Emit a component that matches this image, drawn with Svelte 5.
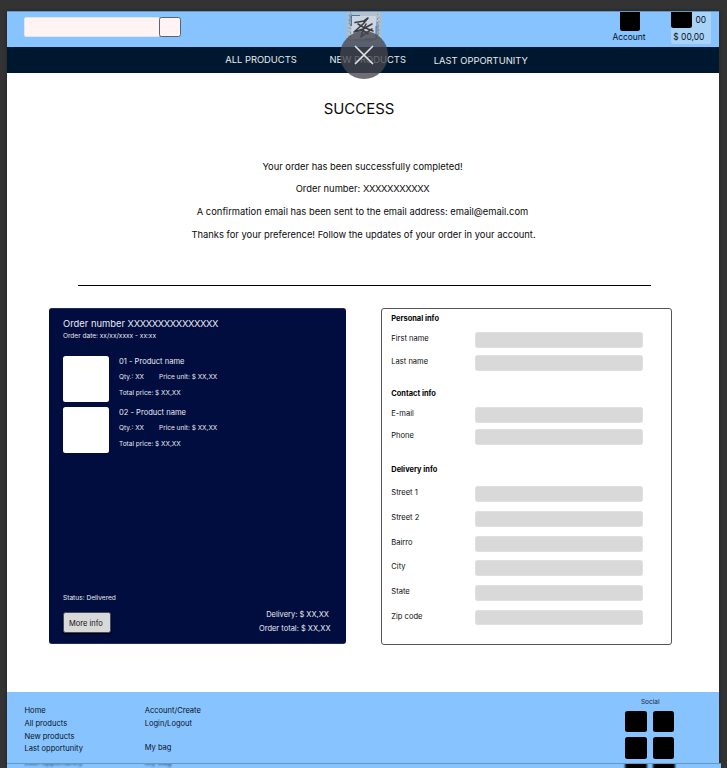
<script>
  const products = ['01 - Product name', '02 - Product name'];
  const groups = [
    { title: 'Personal info', kind: 'personal', fields: ['First name', 'Last name'] },
    { title: 'Contact info', kind: 'contact', fields: ['E-mail', 'Phone'] },
    { title: 'Delivery info', kind: 'delivery', fields: ['Street 1', 'Street 2', 'Bairro', 'City', 'State', 'Zip code'] }
  ];
</script>

<div class="backdrop">
  <div class="page">
    <header>
      <div class="search"><div class="query"></div><button class="go" aria-label="Search"></button></div>
      <svg class="logo" width="36" height="32" viewBox="0 0 36 32">
        <rect width="36" height="32" fill="#a3bfd8" />
        <path d="M2 0h32v31H2z" fill="#b4c2cf" />
        <path d="M3 2l3-1 1 6-2 8-2-3zM29 8l4 4v11l-3 2zM5 28l8-2 15 2-3 2-15-1z" fill="#6d93b5" opacity=".6" />
        <path d="M4.500 0v32M3 3v26M31.500 2v29M33 5v24" stroke="#587f9f" stroke-dasharray="1 3 2 2" opacity=".6" />
        <rect x="5.500" y="4" width="24.500" height="23" fill="#ccd5e1" />
        <path d="M5.500 14V3.500H14M30 14v13H19" fill="none" stroke="#47799e" />
        <g fill="none" stroke="#3c3d42" stroke-width="1.600" stroke-linecap="round" stroke-linejoin="round">
          <path d="M9 10.500l9-1.500 4-3-5 6-9 8 9-3 9-5M8 20l9-2" />
          <path d="M12 12l5 3 10 4M20 12l-3 6-2 7 5-4 6-4M18 19l4 3" />
        </g>
      </svg>
      <div class="account"><i></i><span>Account</span></div>
      <div class="bag"><div class="count"><i></i><span>00</span></div><span>$ 00,00</span></div>
    </header>
    <nav><a>ALL PRODUCTS</a><a>NEW PRODUCTS</a><a class="last">LAST OPPORTUNITY</a></nav>
    <svg class="close" width="48" height="48" viewBox="0 0 48 48">
      <circle cx="24" cy="24" r="24" fill="#45454d" fill-opacity=".78" />
      <path d="M15.500 15.500l17 17M32.500 15.500l-17 17" stroke="#e1e3e7" stroke-width="1.700" stroke-linecap="round" />
    </svg>

    <main>
      <h1>SUCCESS</h1>
      <div class="message">
        <p>Your order has been successfully completed!</p>
        <p>Order number: <span class="xs">XXXXXXXXXXX</span></p>
        <p>A confirmation email has been sent to the email address: email@email.com</p>
        <p class="thanks">Thanks for your preference! Follow the updates of your order in your account.</p>
      </div>
      <hr />
      <div class="cards">
        <section class="order">
          <h2>Order number <span class="xs">XXXXXXXXXXXXXXX</span></h2>
          <p class="date">Order date: xx/xx/xxxx - xx:xx</p>
          {#each products as name}
            <div class="product">
              <div class="thumb"></div>
              <div class="details">
                <strong>{name}</strong>
                <p><span>Qty.: XX</span><span>Price unit: $ XX,XX</span></p>
                <p>Total price: $ XX,XX</p>
              </div>
            </div>
          {/each}
          <p class="status">Status: Delivered</p>
          <div class="bottom">
            <button class="more">More info</button>
            <div class="totals"><p class="delivery-cost">Delivery: $ XX,XX</p><p>Order total: $ XX,XX</p></div>
          </div>
        </section>

        <section class="info">
          {#each groups as group}
            <div class={group.kind}>
              <h3>{group.title}</h3>
              <div class="fields">
                {#each group.fields as field}
                  <div class="field"><span>{field}</span><div class="value"></div></div>
                {/each}
              </div>
            </div>
          {/each}
        </section>
      </div>
    </main>

    <footer>
      <div class="links first"><a>Home</a><a>All products</a><a>New products</a><a>Last opportunity</a></div>
      <div class="links"><a>Account/Create</a><a>Login/Logout</a><a class="mybag">My bag</a></div>
      <div class="social"><span>Social</span><div class="icons"><i></i><i></i><i></i><i></i></div></div>
    </footer>
    <div class="edge">
      <span class="ghost">Last opportunity</span><span class="ghost">My bag</span>
      <div class="shades"><i></i><i></i></div>
    </div>
  </div>
</div>

<style>
  :global(body) { margin: 0; background: #333; }
  * { box-sizing: border-box; }
  h1, h2, h3, p { margin: 0; font-weight: 400; }
  i { display: block; background: #000; flex: none; }
  .backdrop { height: 768px; padding: 11px 8px 0 7px; overflow: hidden; background: #333; font-family: Inter, sans-serif; color: #0b0b0b; }
  .page { position: relative; height: 757px; display: flex; flex-direction: column; background: #fff; box-shadow: 0 0 3px #222; white-space: nowrap; }

  header { display: flex; height: 36px; flex: none; border-top: 1px solid #6397c7; background: #87c4ff; font-size: 8.440px; line-height: 12px; color: #08131f; }
  .search { display: flex; width: 157px; height: 20px; margin: 5px 0 0 17px; }
  .query { width: 136px; height: 19.500px; border-radius: 2px; background: #fff3f3; border: 1px solid #e5e4ee; }
  .go { width: 22px; height: 20px; margin-left: -1px; padding: 0; border: 1px solid #62616a; border-radius: 2.500px; background: #fff3f3; }
  .logo { margin-left: 165px; flex: none; }
  .account { display: flex; flex-direction: column; align-items: center; width: 34px; margin-left: 230px; }
  .account i { width: 20.500px; height: 18.500px; margin-left: 2px; border-radius: 0 0 2.500px 2.500px; }
  .account span { margin-top: .5px; }
  .bag { width: 40px; height: 32px; margin-left: 25px; border-radius: 0 0 2px 2px; background: #a9d2f7; }
  .bag > span { display: block; margin: 3.500px 0 0 2.300px; }
  .count { display: flex; height: 15.500px; }
  .count i { width: 20.500px; height: 15.500px; border-radius: 0 0 2.500px 2.500px; }
  .count span { margin: 2px 0 0 4px; }

  nav { display: flex; height: 26px; flex: none; padding-left: 218.200px; background: #00182f; color: #e7eaee; font-size: 9.380px; line-height: 25px; }
  nav a { width: 104.300px; }
  nav .last { line-height: 27px; }
  .close { position: absolute; left: 333px; top: 20px; }

  main { height: 619px; flex: none; }
  h1 { margin-top: 26px; padding-right: 8px; text-align: center; font-size: 14.950px; line-height: 20px; }
  .message { margin-top: 36.500px; text-align: center; font-size: 9.390px; line-height: 22.550px; padding-right: 1px; }
  .message .thanks { padding: .8px 0 0 2px; margin-bottom: -.8px; }
  .xs { letter-spacing: -.36px; }
  hr { width: 573px; height: 1px; margin: 39.300px 0 0 71px; border: 0; background: #000; }
  .cards { display: flex; margin: 22px 0 0 42px; }

  .order { display: flex; flex-direction: column; width: 296.500px; height: 336.500px; padding: 8px 14px 0; border: 1px solid #202c59; border-width: 1px 0; border-radius: 3px; background: #000d3e; color: #e9ebf2; }
  h2 { height: 12px; font-size: 9.380px; line-height: 13px; }
  .date { height: 10px; margin: 2px 0 15px; font-size: 6.560px; line-height: 10px; }
  .product { display: flex; height: 46px; margin-bottom: 5px; }
  .thumb { width: 46px; height: 46px; border-radius: 2.500px; background: #fff; }
  .details { padding-left: 10px; font-size: 6.500px; line-height: 15.500px; }
  .details strong { display: block; font-size: 7.570px; font-weight: 400; line-height: 12px; }
  .details p { display: flex; }
  .details p:nth-child(2) { margin-top: 1.700px; }
  .details p:nth-child(3) { margin-top: .5px; }
  .details p span:first-child { width: 40px; }
  .status { height: 10px; margin-top: 135px; font-size: 6.600px; line-height: 10px; }
  .bottom { display: flex; justify-content: space-between; margin-top: 5px; font-size: 7.500px; line-height: 14.400px; }
  .more { width: 47.500px; height: 21px; margin-top: 4.500px; padding: 1px 0 0 5px; border: 1px solid #444b5f; border-radius: 2.500px; background: #d9d9d9; box-shadow: 0 1px 1.500px #000; color: #111; font: 7.500px/19px Inter, sans-serif; text-align: left; }
  .totals { margin: .1px 1px 0 0; text-align: right; }
  .delivery-cost { padding-right: 1.500px; }

  .info { width: 291px; height: 337px; margin-left: 35.500px; padding: 4px 28.500px 0 9.300px; border: 1px solid #555; border-radius: 3px; font-size: 7.560px; }
  h3 { height: 12px; font-size: 7.450px; line-height: 12px; font-weight: 700; color: #000; }
  .contact h3, .delivery h3 { line-height: 13.500px; }
  .fields { display: flex; flex-direction: column; justify-content: space-between; }
  .field { display: flex; justify-content: space-between; height: 15.800px; }
  .field span { line-height: 13.400px; }
  .delivery .field span { line-height: 13px; }
  .value { width: 167.500px; height: 15.800px; border-radius: 2.500px; background: #d9d9d9; border: 1px solid #dfdfdf; }
  .personal { height: 74.500px; }
  .personal .fields { height: 39px; margin-top: 7px; }
  .contact { height: 76px; }
  .contact .fields { height: 38.500px; margin-top: 7.300px; }
  .delivery .fields { height: 139px; margin-top: 11px; }

  footer { display: flex; height: 71px; flex: none; padding-left: 17.500px; background: #87c4ff; color: #07111c; font-size: 7.560px; line-height: 12.750px; }
  .links { display: flex; flex-direction: column; width: 120.200px; padding-top: 13px; }
  .mybag { margin-top: 11.500px; }
  .social { width: 50px; margin: 4px 0 0 360.500px; }
  .social span { display: block; height: 10px; padding-left: 15.500px; color: #1d2a38; font-size: 6.560px; line-height: 12px; }
  .icons { display: flex; flex-wrap: wrap; gap: 5px 6px; margin-top: 4.500px; }
  .icons i { width: 21.500px; height: 21.500px; border-radius: 2.500px; }
  .edge { display: flex; width: 714px; height: 5px; flex: none; padding-left: 17.500px; overflow: hidden; border-top: 1px solid #6797c1; background: #87c4ff; font-size: 7.560px; line-height: 10px; }
  .ghost { width: 120.200px; height: 10px; margin-top: -6px; filter: blur(.9px); color: #07111c; }
  .shades { display: flex; gap: 6px; margin-left: 360.500px; filter: blur(1px); }
  .shades i { width: 22px; height: 10px; margin-top: -3px; }
</style>
